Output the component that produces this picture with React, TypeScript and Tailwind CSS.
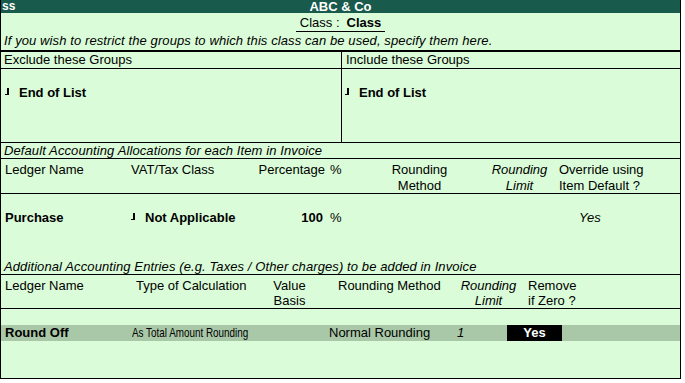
import React from "react";

function Mark() {
  return <span className="inline-block shrink-0 w-[4px] h-[7px] mt-[3px] border-r-2 border-b border-black" />;
}

export default function App() {
  return (
    <div className="w-[685px] h-[383px] bg-white font-['Liberation_Sans',Arial,sans-serif] text-[13px] text-black">
      <div className="w-[681px] h-[379px] flex flex-col border-x border-b border-black bg-[#dafcd8]">
        {/* Title bar */}
        <div className="h-[13px] shrink-0 bg-[#185a4b] text-white font-bold grid grid-cols-[1fr_auto_1fr] items-center leading-[13px]">
          <span className="pl-[1px] text-[12px]">ss</span>
          <span className="text-[13px]">ABC &amp; Co</span>
          <span />
        </div>

        {/* Class row */}
        <div className="h-[19px] shrink-0 flex justify-center pt-[1px]">
          <span className="inline-flex leading-[17px] border-b border-black px-[4px]">
            <span>Class :</span>
            <span className="font-bold ml-[7px]">Class</span>
          </span>
        </div>

        {/* Info row */}
        <div className="h-[18px] shrink-0 leading-[18px] pl-[3px] italic tracking-[0.1px]">
          If you wish to restrict the groups to which this class can be used, specify them here.
        </div>

        {/* Groups */}
        <div className="h-[93px] shrink-0 flex border-t-2 border-b border-black">
          <div className="w-[341px] border-r border-black flex flex-col">
            <div className="h-[17px] leading-[16px] pl-[3px] border-b border-black">Exclude these Groups</div>
            <div className="flex items-start pt-[16px] pl-[4px] leading-[16px]">
              <Mark />
              <span className="ml-[10px] font-bold">End of List</span>
            </div>
          </div>
          <div className="flex-1 flex flex-col">
            <div className="h-[17px] leading-[16px] pl-[4px] border-b border-black">Include these Groups</div>
            <div className="flex items-start pt-[16px] pl-[3px] leading-[16px]">
              <Mark />
              <span className="ml-[10px] font-bold">End of List</span>
            </div>
          </div>
        </div>

        {/* Default Accounting Allocations */}
        <div className="h-[16px] shrink-0 leading-[15px] pl-[3px] italic tracking-[0.1px] border-b border-black">
          Default Accounting Allocations for each Item in Invoice
        </div>
        <div className="h-[35px] shrink-0 flex pt-[3px] leading-[16px] border-b border-black">
          <div className="w-[130px] pl-[4px]">Ledger Name</div>
          <div className="w-[127px]">VAT/Tax Class</div>
          <div className="w-[67px] text-right">Percentage</div>
          <div className="w-[55px] pl-[5px]">%</div>
          <div className="w-[79px] text-center">
            <div>Rounding</div>
            <div>Method</div>
          </div>
          <div className="w-[21px]" />
          <div className="w-[79px] text-center italic">
            <div>Rounding</div>
            <div>Limit</div>
          </div>
          <div className="flex-1">
            <div>Override using</div>
            <div>Item Default ?</div>
          </div>
        </div>
        <div className="h-[65px] shrink-0 pt-[16px] leading-[16px]">
          <div className="flex">
            <div className="w-[130px] pl-[4px] font-bold">Purchase</div>
            <div className="w-[127px] flex items-start">
              <Mark />
              <span className="ml-[10px] font-bold">Not Applicable</span>
            </div>
            <div className="w-[67px] text-right font-bold pr-[2px]">100</div>
            <div className="w-[55px] pl-[5px]">%</div>
            <div className="w-[179px]" />
            <div className="flex-1 pl-[20px] italic">Yes</div>
          </div>
        </div>

        {/* Additional Accounting Entries */}
        <div className="h-[16px] shrink-0 leading-[15px] pl-[3px] italic tracking-[0.1px] border-b border-black">
          Additional Accounting Entries (e.g. Taxes / Other charges) to be added in Invoice
        </div>
        <div className="h-[34px] shrink-0 flex pt-[3px] leading-[15px] border-b border-black">
          <div className="w-[131px] pl-[4px]">Ledger Name</div>
          <div className="w-[128px] pl-[4px]">Type of Calculation</div>
          <div className="w-[59px] text-center">
            <div>Value</div>
            <div>Basis</div>
          </div>
          <div className="w-[136px] pl-[19px]">Rounding Method</div>
          <div className="w-[67px] text-center italic">
            <div>Rounding</div>
            <div>Limit</div>
          </div>
          <div className="flex-1 pl-[6px]">
            <div>Remove</div>
            <div>if Zero ?</div>
          </div>
        </div>
        <div className="h-[16px] shrink-0" />
        <div className="h-[16px] shrink-0 flex leading-[16px] bg-[#a9c8a8]">
          <div className="w-[131px] pl-[4px] font-bold">Round Off</div>
          <div className="w-[197px] whitespace-nowrap overflow-visible">
            <span className="inline-block origin-left [transform:scaleX(0.76)]">As Total Amount Rounding</span>
          </div>
          <div className="w-[126px]">Normal Rounding</div>
          <div className="w-[52px] pl-[2px] italic">1</div>
          <div className="w-[55px] bg-black text-white font-bold text-center">Yes</div>
        </div>
        <div className="flex-1" />
      </div>
    </div>
  );
}
